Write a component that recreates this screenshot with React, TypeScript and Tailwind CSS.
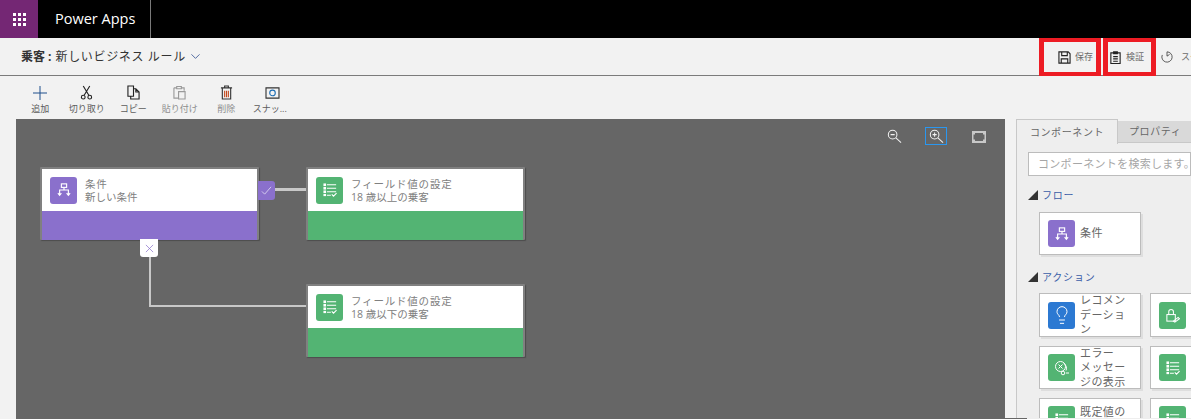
import { ChevronDown, Lightbulb } from 'lucide-react';
import type { ReactNode } from 'react';

const jp = "font-['Open_Sans','Noto_Sans_CJK_JP',sans-serif]";

function FlowIcon({ className }: { className?: string }) {
  return (
    <svg viewBox="0 0 16 16" fill="none" stroke="currentColor" strokeWidth="1.3" className={className}>
      <rect x="5" y="1" width="6" height="4" />
      <path d="M8 5v3M3 13V8h10v5M1 11.500l2 2.500 2-2.500M11 11.500l2 2.500 2-2.500" />
    </svg>
  );
}

function ListCheckIcon({ className }: { className?: string }) {
  return (
    <svg viewBox="0 0 16 16" fill="none" stroke="currentColor" strokeWidth="1.3" className={className}>
      <path d="M4.500 2h10.500M4.500 6h10.500M4.500 10h10.500M4.500 14h4.500M10 13l2 2 3.500-3.500" />
      <rect x="0.500" y="0.500" width="3" height="3" fill="currentColor" stroke="none" />
      <rect x="0.500" y="4.500" width="3" height="3" fill="currentColor" stroke="none" />
      <rect x="0.500" y="8.500" width="3" height="3" fill="currentColor" stroke="none" />
      <rect x="0.500" y="12.500" width="3" height="2.500" fill="currentColor" stroke="none" />
    </svg>
  );
}

function LockPenIcon({ className }: { className?: string }) {
  return (
    <svg viewBox="0 0 16 16" fill="none" stroke="currentColor" strokeWidth="1.1" className={className}>
      <rect x="2" y="7" width="9" height="7" />
      <path d="M4 7V4a2.500 2.500 0 0 1 5 0v3M9 14l5-4 1.500 1.500-5 3.500z" />
    </svg>
  );
}

function MessageXIcon({ className }: { className?: string }) {
  return (
    <svg viewBox="0 0 16 16" fill="none" stroke="currentColor" strokeWidth="1" className={className}>
      <circle cx="6.500" cy="6.500" r="5" />
      <path d="M4.500 4.500l4 4M8.500 4.500l-4 4M10 3.500c2.500 2 3 5 2 7" />
      <circle cx="9" cy="13" r="1.800" />
      <path d="M12 13h3" />
    </svg>
  );
}

function Magnifier({ plus }: { plus?: boolean }) {
  return (
    <svg viewBox="0 0 16 16" fill="none" stroke="#f2f2f2" strokeWidth="1.100" className="size-[15px]">
      <circle cx="6" cy="6" r="4.600" />
      <path d="M9.500 9.500l5.500 5M3.800 6h4.400" />
      {plus && <path d="M6 3.800v4.400" />}
    </svg>
  );
}

function ToolItem({ label, faded, labelClass, children }: { label: string; faded?: boolean; labelClass?: string; children: ReactNode }) {
  return (
    <div className="flex w-[46.5px] flex-col items-center">
      <div className="flex h-[17px] items-center justify-center">{children}</div>
      <span className={`mt-[1px] whitespace-nowrap text-[9px] leading-[14px] ${faded ? 'text-[#8e8e8e]' : 'text-[#5c5c5c]'} ${labelClass ?? ''}`}>{label}</span>
    </div>
  );
}

function Node({ className, title, sub, color, icon }: { className: string; title: string; sub: string; color: string; icon: ReactNode }) {
  return (
    <div className={`absolute h-[73px] w-[219px] rounded-[1px] border-2 border-[#808080] bg-white shadow-[1px_1px_1px_#4d4d4d] ${className}`}>
      <div className="flex h-[42px] items-center pl-[8px]">
        <div className={`flex size-[27px] items-center justify-center rounded-[3px] text-white ${color}`}>{icon}</div>
        <div className="ml-[8px] pt-[2px] text-[10.500px] leading-[13px] text-[#808080]">
          <div className="tracking-[0.8px]">{title}</div>
          <div>{sub}</div>
        </div>
      </div>
      <div className={`h-[29px] ${color}`} />
    </div>
  );
}

function PanelCard({ label, color, icon, tall }: { label?: string; color: string; icon: ReactNode; tall?: boolean }) {
  return (
    <div className={`flex w-[102px] shrink-0 items-center border border-[#bcbcbc] bg-white pl-[8px] shadow-[2px_2px_0_#dedede] ${tall ? 'h-[44px]' : 'h-[43px]'}`}>
      <div className={`flex size-[27px] shrink-0 items-center justify-center rounded-[3px] text-white ${color}`}>{icon}</div>
      {label && <div className="ml-[5px] w-[46px] whitespace-pre-line text-[11px] leading-[14.500px] tracking-[0.4px] text-[#666]">{label}</div>}
    </div>
  );
}

function SectionTitle({ children }: { children: ReactNode }) {
  return (
    <div className="flex items-center text-[10px] leading-[14px] tracking-[0.8px] text-[#3a5da8]">
      <svg viewBox="0 0 10 10" className="mr-[4px] size-[10px]">
        <path d="M10 0v10H0z" fill="#333" />
      </svg>
      {children}
    </div>
  );
}

export default function App() {
  return (
    <div className={`relative flex h-[419px] w-[1191px] flex-col overflow-hidden bg-[#f2f2f2] ${jp}`}>
      {/* top bar */}
      <div className="flex h-[38px] shrink-0 items-center bg-black">
        <div className="grid size-[38px] grid-cols-[repeat(3,3px)] content-center justify-center gap-[2px] bg-[#742774]">
          {Array.from({ length: 9 }).map((_, i) => (
            <span key={i} className="size-[3px] bg-white" />
          ))}
        </div>
        <div className="flex h-full w-[113px] items-center border-r border-[#7a7a7a] pl-[17px] text-[14.500px] text-white">Power Apps</div>
      </div>

      {/* title bar */}
      <div className="flex h-[38px] shrink-0 items-stretch border-b border-[#7b7b7b]">
        <div className="flex flex-1 items-center pl-[21px] text-[12px] text-[#333]">
          <span className="font-bold">乗客 :</span>
          <span className="ml-[4px] tracking-[0.65px]">新しいビジネス ルール</span>
          <ChevronDown className="ml-[2px] size-[15px] text-[#2f4f8f]" strokeWidth={1.300} />
        </div>
        <div className="flex h-[38px] w-[62px] items-center border-x-[5px] border-y-[4px] border-[#ed1c24] pl-[14px] text-[9px] text-[#6b6b6b]">
          <svg viewBox="0 0 14 14" fill="none" stroke="#222" strokeWidth="1.200" className="size-[13px] shrink-0">
            <path d="M1 1h10l2 2v10H1zM4 1v4h6V1M3.500 13V8.500h7V13" />
          </svg>
          <span className="ml-[4px] whitespace-nowrap">保存</span>
        </div>
        <div className="ml-[2px] flex h-[38px] w-[53px] items-center border-x-[5px] border-y-[4px] border-[#ed1c24] pl-[1px] text-[9px] text-[#6b6b6b]">
          <svg viewBox="0 0 14 14" fill="none" stroke="#222" strokeWidth="1.200" className="size-[13px] shrink-0">
            <path d="M2 2h10v11.500H2zM5 1h4v2H5zM4.500 6h5M4.500 8.500h5M4.500 11h5" />
          </svg>
          <span className="ml-[4px] whitespace-nowrap">検証</span>
        </div>
        <div className="flex w-[35px] items-center overflow-hidden pl-[5px] text-[9px] text-[#6b6b6b]">
          <svg viewBox="0 0 14 14" fill="none" stroke="#444" strokeWidth="1" className="size-[12px] shrink-0">
            <path d="M7 1a6 6 0 1 1-5.500 3.600M7 1v5l3-2" />
          </svg>
          <span className="ml-[8px] whitespace-nowrap">スケジュール</span>
        </div>
      </div>

      <div className="flex min-h-0 flex-1">
        {/* left: toolbar and canvas */}
        <div className="flex w-[1005px] shrink-0 flex-col pl-[16px]">
          <div className="flex h-[43px] shrink-0 items-start pl-[1px] pt-[8px]">
            <ToolItem label="追加">
              <svg viewBox="0 0 14 14" stroke="#1f4e8c" strokeWidth="1" className="size-[14px]">
                <path d="M7 0v14M0 7h14" />
              </svg>
            </ToolItem>
            <ToolItem label="切り取り">
              <svg viewBox="0 0 14 16" fill="none" stroke="#222" strokeWidth="1.200" className="h-[15px] w-[13px]">
                <path d="M3.500 1l6 10M10.500 1l-6 10" />
                <circle cx="3.500" cy="13" r="2" />
                <circle cx="10.500" cy="13" r="2" />
              </svg>
            </ToolItem>
            <ToolItem label="コピー">
              <svg viewBox="0 0 14 16" fill="none" stroke="#222" strokeWidth="1.200" className="h-[15px] w-[13px]">
                <path d="M1 1h6v11H1zM7 4h2.500L13 7.500V15H4v-3M9.500 4v3.500H13" />
              </svg>
            </ToolItem>
            <ToolItem label="貼り付け" faded>
              <svg viewBox="0 0 14 16" fill="none" stroke="#9a9a9a" strokeWidth="1.200" className="h-[15px] w-[13px]">
                <path d="M1 3h3M9 3h3v3M1 3v11h5M4 1.500h5V4H4zM6 7h7v8H6z" />
              </svg>
            </ToolItem>
            <ToolItem label="削除" faded>
              <svg viewBox="0 0 14 16" fill="none" stroke="#333" strokeWidth="1.200" className="h-[15px] w-[13px]">
                <path d="M1 3h12M5 3V1h4v2M2.500 3v12h9V3" />
                <path d="M5 6v7M9 6v7M7 6v7" stroke="#c2491d" />
              </svg>
            </ToolItem>
            <ToolItem label="スナッ..." labelClass="pr-[6px]">
              <svg viewBox="0 0 16 14" fill="none" stroke="#333" strokeWidth="1.200" className="h-[13px] w-[15px]">
                <path d="M1 2h14v11H1z" />
                <circle cx="8" cy="7.500" r="3" stroke="#1f6fb5" />
              </svg>
            </ToolItem>
          </div>

          {/* canvas */}
          <div className="relative flex-1 bg-[#666666]">
            <div className="absolute left-[871px] top-[10px]">
              <Magnifier />
            </div>
            <div className="absolute left-[909px] top-[8px] flex h-[18px] w-[22px] items-center justify-center border border-[#2a97f0]">
              <Magnifier plus />
            </div>
            <svg viewBox="0 0 14 12" className="absolute left-[956px] top-[12px] h-[12px] w-[14px]">
              <path d="M0 0h14v12H0z" fill="#c8c8c8" />
              <path d="M3 2h8v1.500h1.500v5H11V10H3V8.500H1.500v-5H3z" fill="#666" />
            </svg>

            <Node className="left-[24px] top-[48px]" title="条件" sub="新しい条件" color="bg-[#8a70cc]" icon={<FlowIcon className="size-[14px]" />} />
            <Node className="left-[290px] top-[48px]" title="フィールド値の設定" sub="18 歳以上の乗客" color="bg-[#53b473]" icon={<ListCheckIcon className="size-[14px]" />} />
            <Node className="left-[290px] top-[165px]" title="フィールド値の設定" sub="18 歳以下の乗客" color="bg-[#53b473]" icon={<ListCheckIcon className="size-[14px]" />} />

            {/* connectors */}
            <div className="absolute left-[259px] top-[69px] h-[3px] w-[31px] bg-[#c8c8c8]" />
            <div className="absolute left-[133px] top-[136px] h-[50px] w-[2px] bg-[#c8c8c8]" />
            <div className="absolute left-[133px] top-[185.500px] h-[2px] w-[157px] bg-[#c8c8c8]" />
            <div className="absolute left-[242px] top-[62px] flex h-[19px] w-[17px] items-center justify-center rounded-r-[3px] bg-[#8a70cc] text-[#d8d0f0]">
              <svg viewBox="0 0 12 12" fill="none" stroke="currentColor" strokeWidth="1" className="size-[11px]">
                <path d="M1 7l3 3 7-8" />
              </svg>
            </div>
            <div className="absolute left-[124px] top-[120px] flex size-[18px] items-center justify-center rounded-b-[3px] bg-white text-[#8a70cc]">
              <svg viewBox="0 0 10 10" fill="none" stroke="currentColor" strokeWidth="0.800" className="size-[9px]">
                <path d="M1 1l8 8M9 1l-8 8" />
              </svg>
            </div>
          </div>
        </div>

        {/* right panel */}
        <div className="min-w-0 flex-1 pl-[11px] pt-[43px]">
          <div className="flex h-[24px] text-[10px] tracking-[0.6px] text-[#666]">
            <div className="z-10 flex h-[25px] w-[102px] shrink-0 items-center justify-center border-x border-t border-[#c8c8c8] bg-[#eeeeee]">コンポーネント</div>
            <div className="mt-[2px] flex h-[22px] flex-1 items-center whitespace-nowrap border-b border-[#c8c8c8] bg-[#d9d9d9] pl-[11px]">プロパティ</div>
          </div>
          <div className="h-[300px] border-l border-[#c8c8c8] bg-[#eeeeee] pl-[11px] pt-[9px]">
            <div className="flex h-[24px] items-center overflow-hidden whitespace-nowrap border border-[#bcbcbc] bg-white pl-[9px] text-[11px] tracking-[0.3px] text-[#a6a6a6]">
              コンポーネントを検索します。
            </div>
            <div className="mt-[12px]">
              <SectionTitle>フロー</SectionTitle>
            </div>
            <div className="ml-[11px] mt-[10px]">
              <PanelCard label="条件" color="bg-[#8a70cc]" icon={<FlowIcon className="size-[14px]" />} />
            </div>
            <div className="mt-[15px]">
              <SectionTitle>アクション</SectionTitle>
            </div>
            <div className="ml-[11px] mt-[9px] flex flex-col gap-[9px]">
              <div className="flex gap-[9px]">
                <PanelCard label={'レコメン\nデーショ\nン'} color="bg-[#2c79d2]" icon={<Lightbulb className="size-[20px]" strokeWidth={1.200} />} tall />
                <PanelCard color="bg-[#53b473]" icon={<LockPenIcon className="size-[15px]" />} tall />
              </div>
              <div className="flex gap-[9px]">
                <PanelCard label={'エラー\nメッセー\nジの表示'} color="bg-[#53b473]" icon={<MessageXIcon className="size-[16px]" />} />
                <PanelCard color="bg-[#53b473]" icon={<ListCheckIcon className="size-[14px]" />} />
              </div>
              <div className="flex gap-[9px]">
                <PanelCard label={'既定値の\n設定'} color="bg-[#53b473]" icon={<ListCheckIcon className="size-[14px]" />} />
                <PanelCard color="bg-[#53b473]" icon={<ListCheckIcon className="size-[14px]" />} />
              </div>
            </div>
          </div>
        </div>
      </div>

      {/* window edge that covers the bottom row */}
      <div className="absolute bottom-0 left-[1005px] h-[1px] w-[22px] bg-[#666666]" />
      <div className="absolute bottom-0 left-[1027px] h-[1px] w-[164px] bg-[#eeeeee]" />
    </div>
  );
}
